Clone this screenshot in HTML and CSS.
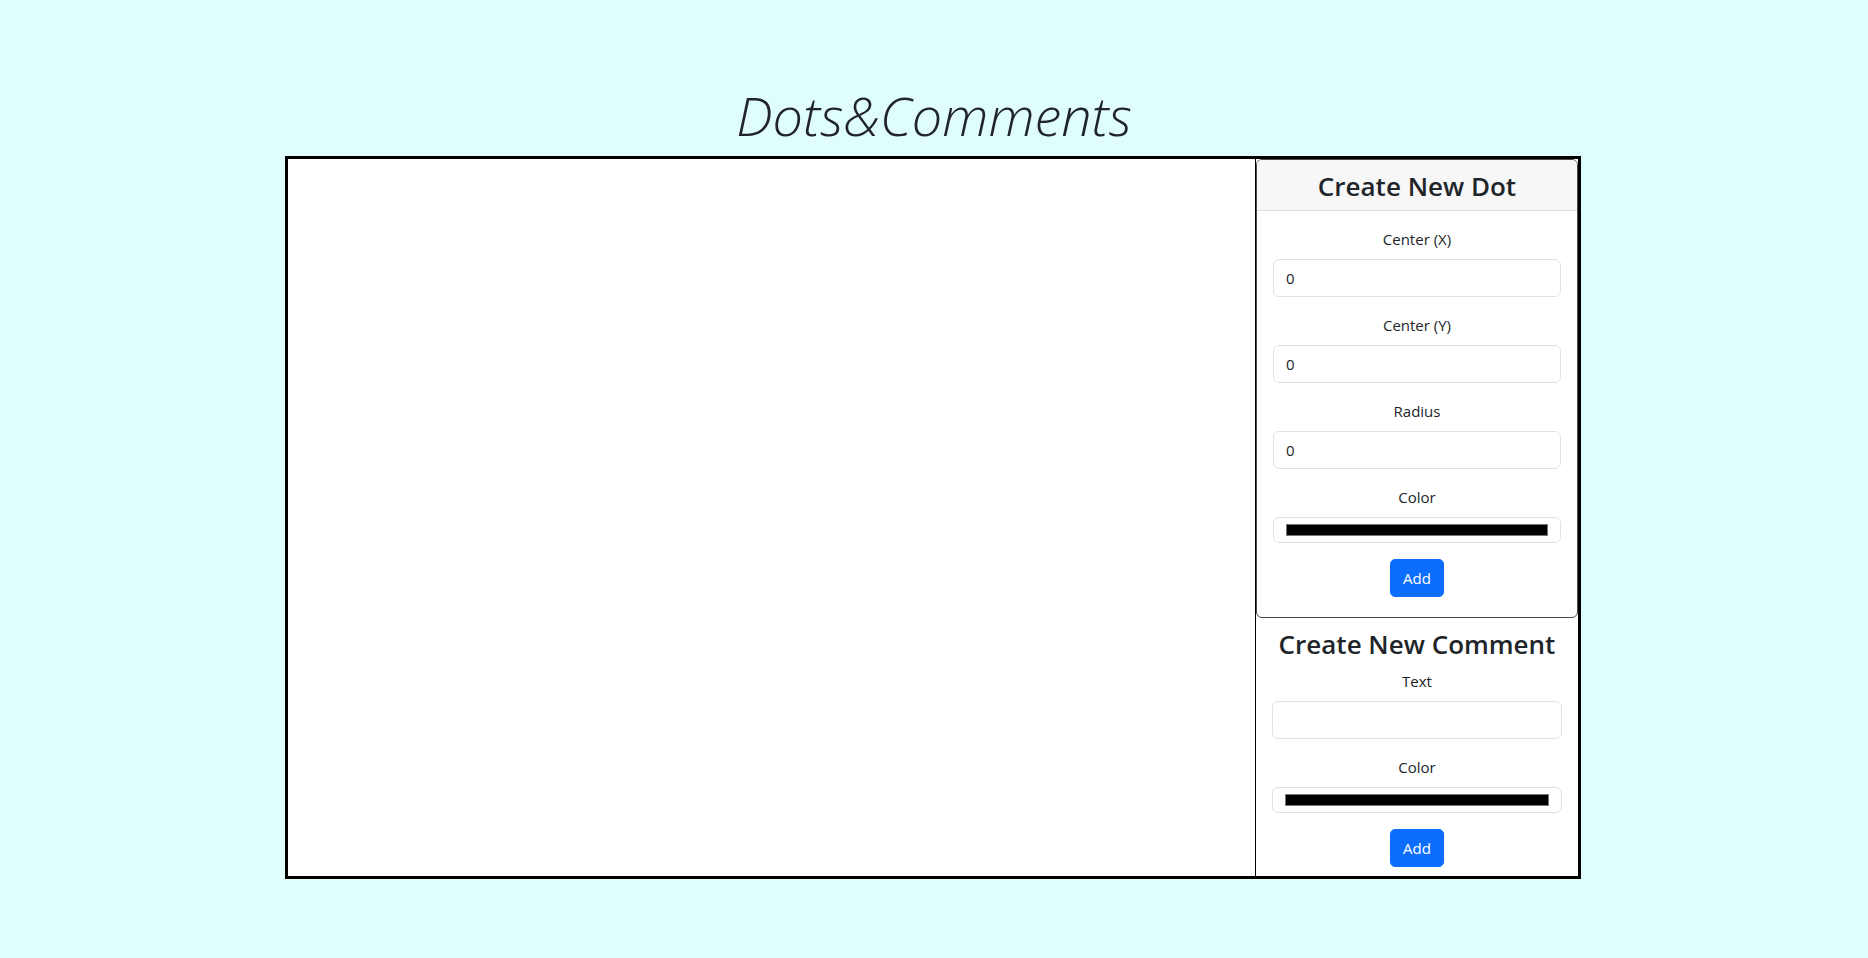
FILE: index.html
```html
<!DOCTYPE html>
<html lang="en">
<head>
<meta charset="utf-8">
<title>Dots&amp;Comments</title>
<link rel="stylesheet" href="styles.css">
</head>
<body>
<div class="page">
  <h1 class="title">Dots&amp;Comments</h1>
  <div class="board">
    <div class="canvas"></div>
    <aside class="sidebar">
      <section class="card">
        <div class="card-header"><h3 class="heading">Create New Dot</h3></div>
        <form class="card-body">
          <div class="field">
            <label class="label">Center (X)</label>
            <input class="control" type="number" value="0">
          </div>
          <div class="field">
            <label class="label">Center (Y)</label>
            <input class="control" type="number" value="0">
          </div>
          <div class="field">
            <label class="label">Radius</label>
            <input class="control" type="number" value="0">
          </div>
          <div class="field">
            <label class="label">Color</label>
            <input class="control control-color" type="color" value="#000000">
          </div>
          <button class="btn" type="button">Add</button>
        </form>
      </section>
      <section class="comment">
        <h3 class="heading comment-heading">Create New Comment</h3>
        <form class="comment-form">
          <div class="field">
            <label class="label">Text</label>
            <input class="control" type="text" value="">
          </div>
          <div class="field">
            <label class="label">Color</label>
            <input class="control control-color" type="color" value="#000000">
          </div>
          <button class="btn" type="button">Add</button>
        </form>
      </section>
    </aside>
  </div>
</div>
</body>
</html>
```
FILE: styles.css
```css
* { box-sizing: border-box; }
html, body {
  margin: 0;
  padding: 0;
}
body {
  background: #e0fdfd;
  color: #212529;
  font-family: "Open Sans", "Noto Sans", sans-serif;
  font-size: 15px;
  line-height: 24px;
}
.page {
  padding-top: 82px;
}
.title {
  margin: 0 0 7px;
  text-align: center;
  font-size: 54px;
  font-weight: 300;
  font-style: italic;
  line-height: 67px;
  color: #212529;
}
.board {
  width: 1296px;
  height: 723px;
  margin: 0 0 0 calc(50% - 649px);
  border: 3px solid #000;
  display: flex;
  background: #fff;
}
.canvas {
  flex: 1;
  background: #fff;
  border-right: 1px solid #000;
}
.sidebar {
  width: 322px;
  display: flex;
  flex-direction: column;
}
.card {
  border: 1px solid #4a4a4a;
  border-radius: 6px;
  overflow: hidden;
}
.card-header {
  background: #f7f7f7;
  border-bottom: 1px solid #dcdcdc;
  padding: 10px 16px 6px;
}
.heading {
  margin: 0;
  text-align: center;
  font-size: 26px;
  font-weight: 600;
  line-height: 33.6px;
  color: #212529;
}
.card-body {
  padding: 16px 16px 20px;
  text-align: center;
  margin: 0;
}
.field {
  margin-bottom: 16px;
}
.label {
  display: block;
  margin-bottom: 8px;
  line-height: 24px;
  text-align: center;
}
.control {
  display: block;
  width: 100%;
  height: 38px;
  padding: 6px 12px;
  border: 1px solid #dee2e6;
  border-radius: 6px;
  background: #fff;
  color: #212529;
  font-family: inherit;
  font-size: 15px;
  line-height: 24px;
  text-align: left;
  -moz-appearance: textfield;
}
.control::-webkit-outer-spin-button,
.control::-webkit-inner-spin-button {
  -webkit-appearance: none;
  margin: 0;
}
.control-color {
  height: 26px;
  padding: 6px 12px;
  -webkit-appearance: none;
  appearance: none;
  cursor: pointer;
}
.control-color::-webkit-color-swatch-wrapper {
  padding: 0;
}
.control-color::-webkit-color-swatch {
  border: 1px solid #767676;
  border-radius: 0;
}
.btn {
  display: inline-block;
  padding: 6px 12px;
  border: 1px solid #0d6efd;
  border-radius: 5px;
  background: #0d6efd;
  color: #fff;
  font-family: inherit;
  font-size: 15px;
  line-height: 24px;
  cursor: pointer;
}
.comment {
  padding: 0 16px;
  text-align: center;
}
.comment-heading {
  margin: 10px 0 8px;
}
.comment-form {
  margin: 0;
}
```
